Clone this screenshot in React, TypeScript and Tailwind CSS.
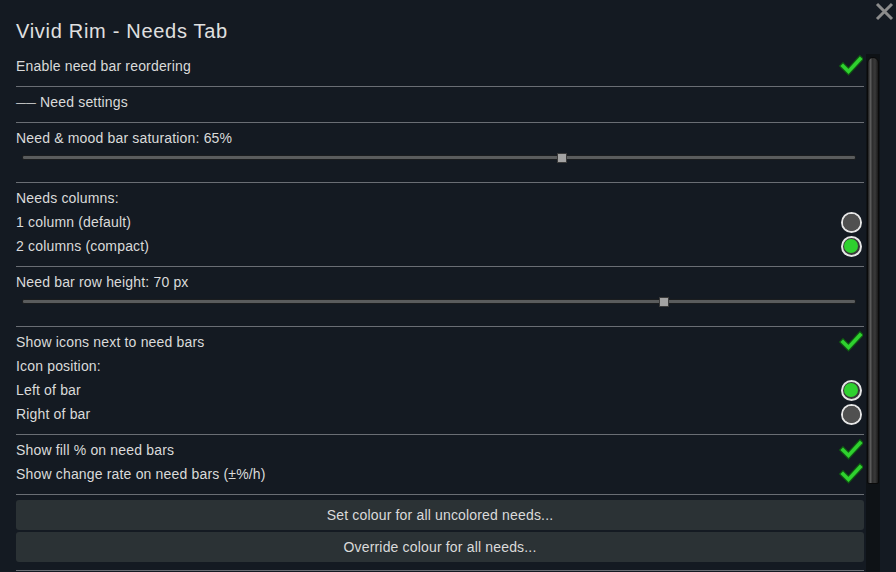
import React from "react";

const font = { fontFamily: '"Liberation Sans", Arial, sans-serif' };

function Check() {
  return (
    <svg width="24" height="22" viewBox="0 0 24 22" className="block">
      <path d="M4 11 L9.5 16.5 L21 4" fill="none" stroke="#0f5a12" strokeWidth="6" strokeLinecap="square" strokeLinejoin="miter" />
      <path d="M4 11 L9.5 16.5 L21 4" fill="none" stroke="#2fd12f" strokeWidth="3.6" strokeLinecap="square" strokeLinejoin="miter" />
    </svg>
  );
}

function Radio({ on }: { on: boolean }) {
  return (
    <div className="w-[21px] h-[21px] rounded-full border-2 border-[#e6e6e6] bg-[#3a3a3a] flex items-center justify-center">
      <div className={on ? "w-[14px] h-[14px] rounded-full bg-[#2fd12f]" : "w-[17px] h-[17px] rounded-full bg-[#505050]"} />
    </div>
  );
}

function Divider() {
  return <div className="mt-[8px] mb-[3px] h-px bg-[#6a6e74]" />;
}

function Row({ label, right }: { label: React.ReactNode; right?: React.ReactNode }) {
  return (
    <div className="h-6 flex items-center justify-between">
      <span className="text-[14px] tracking-[0.17px] text-[#dadada] flex items-center">{label}</span>
      {right ? <div className="w-6 flex justify-center mr-[1px]">{right}</div> : null}
    </div>
  );
}

function Slider({ pct }: { pct: number }) {
  return (
    <div className="h-6 pl-[6px] pr-[8px] pt-[3px]">
      <div className="relative h-[9px] flex items-center">
        <div className="w-full h-[5px] rounded-[2px] bg-[#5a5c5d] border border-[#1b1d1f]" />
        <div
          className="absolute top-0 w-[10px] h-[10px] bg-[#a3a3a3] border border-[#3a3a3a]"
          style={{ left: `calc(${pct}% - 5px)` }}
        />
      </div>
    </div>
  );
}

function Button({ label }: { label: string }) {
  return (
    <div className="h-[30px] rounded-[3px] bg-[#2b3235] flex items-center justify-center text-[14px] tracking-[0.17px] text-[#dadada]">
      {label}
    </div>
  );
}

export default function App() {
  return (
    <div className="relative w-[896px] h-[572px] overflow-hidden bg-[#141a22]" style={font}>
      {/* close button */}
      <svg className="absolute right-[2px] top-[2px]" width="19" height="19" viewBox="0 0 19 19">
        <path d="M2 2 L17 17 M17 2 L2 17" stroke="#8c8c8c" strokeWidth="3" />
      </svg>

      <div className="pl-4 pt-[19px]">
        <div className="h-6 leading-6 text-[20px] tracking-[0.7px] text-[#e0e0e0]">Vivid Rim - Needs Tab</div>
      </div>

      <div className="mt-[11px] flex pl-4">
        <div className="w-[848px] flex flex-col">
          <Row label="Enable need bar reordering" right={<Check />} />
          <Divider />
          <Row
            label={
              <>
                <span className="text-[10px] tracking-normal mr-[4px]">——</span>
                Need settings
              </>
            }
          />
          <Divider />
          <Row label="Need & mood bar saturation: 65%" />
          <Slider pct={64.8} />
          <Divider />
          <Row label="Needs columns:" />
          <Row label="1 column (default)" right={<Radio on={false} />} />
          <Row label="2 columns (compact)" right={<Radio on />} />
          <Divider />
          <Row label="Need bar row height: 70 px" />
          <Slider pct={77} />
          <Divider />
          <Row label="Show icons next to need bars" right={<Check />} />
          <Row label="Icon position:" />
          <Row label="Left of bar" right={<Radio on />} />
          <Row label="Right of bar" right={<Radio on={false} />} />
          <Divider />
          <Row label="Show fill % on need bars" right={<Check />} />
          <Row label="Show change rate on need bars (±%/h)" right={<Check />} />
          <Divider />
          <div className="mt-[2px] flex flex-col gap-[2px]">
            <Button label="Set colour for all uncolored needs..." />
            <Button label="Override colour for all needs..." />
          </div>
          <Divider />
        </div>

        {/* scrollbar */}
        <div className="ml-[2px] w-[14px] h-[600px] bg-[#0e1216] pt-[3px] px-[1px]">
          <div className="h-[427px] rounded-t-[6px] rounded-b-[2px] border border-[#0a0a0a] bg-[linear-gradient(to_right,#1c1c1c,#5a5a5a_25%,#2e2e2e_45%,#3a3a3a_70%,#1a1a1a)]" />
        </div>
      </div>
    </div>
  );
}
